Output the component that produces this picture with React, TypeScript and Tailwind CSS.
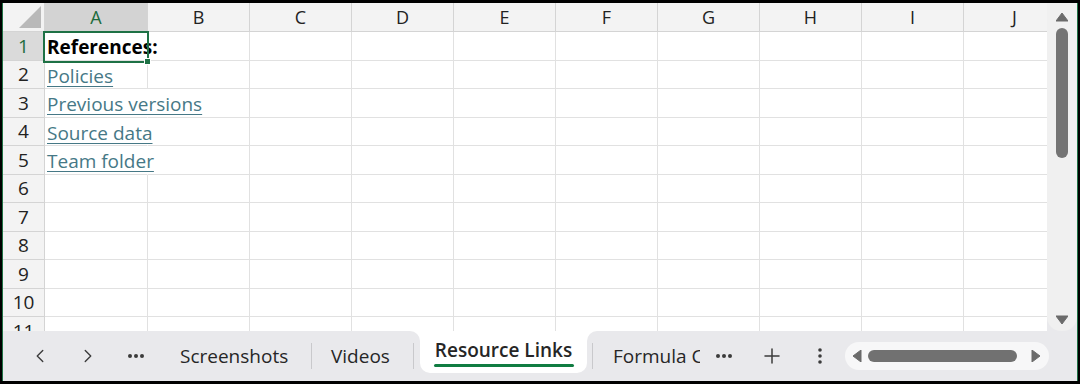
import { ChevronLeft, ChevronRight, Plus } from "lucide-react";

const COLS = ["A", "B", "C", "D", "E", "F", "G", "H", "I", "J"];
const ROW_H = [29, 28, 29, 28, 29, 28, 29, 28, 29, 28, 29];

type Cell = { text: string; bold?: boolean; link?: boolean };
const CELLS: Record<number, Cell> = {
  1: { text: "References:", bold: true },
  2: { text: "Policies", link: true },
  3: { text: "Previous versions", link: true },
  4: { text: "Source data", link: true },
  5: { text: "Team folder", link: true },
};

function Dots({ vertical = false }: { vertical?: boolean }) {
  return vertical ? (
    <svg width="6" height="18" viewBox="0 0 6 18">
      <circle cx="3" cy="3" r="1.8" fill="#3b3b3b" />
      <circle cx="3" cy="9" r="1.8" fill="#3b3b3b" />
      <circle cx="3" cy="15" r="1.8" fill="#3b3b3b" />
    </svg>
  ) : (
    <svg width="18" height="6" viewBox="0 0 18 6">
      <circle cx="3" cy="3" r="2" fill="#3b3b3b" />
      <circle cx="9" cy="3" r="2" fill="#3b3b3b" />
      <circle cx="15" cy="3" r="2" fill="#3b3b3b" />
    </svg>
  );
}

function Tri({ dir }: { dir: "up" | "down" | "left" | "right" }) {
  const pts = {
    up: "0,9 6,1 12,9",
    down: "0,1 6,9 12,1",
    left: "9,0 1,6 9,12",
    right: "1,0 9,6 1,12",
  }[dir];
  const vert = dir === "up" || dir === "down";
  return (
    <svg width={vert ? 12 : 10} height={vert ? 10 : 12} viewBox={vert ? "0 0 12 10" : "0 0 10 12"}>
      <polygon points={pts} fill="#6b6b6b" strokeLinejoin="round" stroke="#6b6b6b" strokeWidth="1" />
    </svg>
  );
}

function Grid() {
  return (
    <div className="relative w-[1044px] h-[328px] overflow-hidden bg-white">
      {/* column header row */}
      <div className="flex h-[29px]">
        <div className="relative w-[42px] shrink-0 bg-[#f3f3f3] border-r border-b border-[#d4d4d4]">
          <svg className="absolute right-[3px] bottom-[3px]" width="22" height="22" viewBox="0 0 22 22">
            <polygon points="22,0 22,22 0,22" fill="#b9b9b9" />
          </svg>
        </div>
        {COLS.map((c, i) => (
          <div
            key={c}
            className={`${i === 0 ? "w-[103px] bg-[#d3d3d3] text-[#1d6b3d]" : "w-[102px] bg-[#f3f3f3] text-[#222]"} shrink-0 flex items-center justify-center border-r border-b border-[#d4d4d4] text-[18px]`}
          >
            {c}
          </div>
        ))}
      </div>
      {ROW_H.map((h, r) => {
        const n = r + 1;
        const cell = CELLS[n];
        return (
          <div key={n} className="flex" style={{ height: h }}>
            <div
              className={`w-[42px] shrink-0 flex items-center justify-center border-r border-b border-[#d4d4d4] text-[19px] ${n === 1 ? "bg-[#dadada] text-[#1d6b3d]" : "bg-[#f3f3f3] text-[#222]"}`}
            >
              {n}
            </div>
            {COLS.map((c, i) => (
              <div
                key={c}
                className={`${i === 0 ? "w-[103px]" : "w-[102px]"} shrink-0 flex items-center pt-[2px] border-b border-[#e1e1e1] ${i === 0 && cell && n !== 2 ? "border-r border-r-transparent" : "border-r border-r-[#e1e1e1]"}`}
              >
                {i === 0 && cell && (
                  <span
                    className={`relative z-10 pl-[2px] whitespace-nowrap text-[19px] leading-[24px] ${cell.bold ? "font-bold text-black" : ""} ${cell.link ? "text-[#467886] underline underline-offset-[3px]" : ""}`}
                  >
                    {cell.text}
                  </span>
                )}
              </div>
            ))}
          </div>
        );
      })}
      {/* active cell outline */}
      <div className="absolute left-[40px] top-[28px] w-[106px] h-[32px] border-2 border-[#1e7145] z-20" />
      <div className="absolute left-[141px] top-[55px] w-[7px] h-[7px] bg-[#1e7145] border border-white z-30" />
    </div>
  );
}

function VScroll() {
  return (
    <div className="w-[30px] h-[328px] bg-[#e9e9ec]">
      <div className="h-full bg-[#f0f0f0] rounded-b-[14px] flex flex-col items-center pt-[9px] pb-[6px]">
        <Tri dir="up" />
        <div className="mt-[6px] w-[12px] h-[130px] rounded-full bg-[#747474]" />
        <div className="flex-1" />
        <Tri dir="down" />
      </div>
    </div>
  );
}

function TabBar() {
  const tabText = "text-[19px] text-[#262626] whitespace-nowrap";
  return (
    <div className="flex h-[50px] bg-white">
      <div className="w-[417px] shrink-0 bg-[#e9e9ec] rounded-tr-[10px] flex items-center pl-[13px]">
        <div className="w-[48px] flex justify-center">
          <ChevronLeft size={22} strokeWidth={1.5} color="#3b3b3b" />
        </div>
        <div className="w-[48px] flex justify-center">
          <ChevronRight size={22} strokeWidth={1.5} color="#3b3b3b" />
        </div>
        <div className="w-[48px] flex justify-center">
          <Dots />
        </div>
        <div className={`w-[151px] pl-[20px] ${tabText}`}>Screenshots</div>
        <div className="w-px h-[26px] bg-[#c9c9cc]" />
        <div className={`w-[101px] pl-[19px] ${tabText}`}>Videos</div>
        <div className="w-px h-[26px] bg-[#c9c9cc]" />
      </div>
      <div className="w-[167px] shrink-0 bg-[#e9e9ec]">
        <div className="h-[42px] bg-white rounded-b-[10px] flex flex-col items-center justify-center">
          <span className={`${tabText} font-semibold text-[#1f1f1f] leading-[24px]`}>Resource Links</span>
          <div className="mt-[2px] w-[140px] h-[3px] bg-[#107c41] rounded-full" />
        </div>
      </div>
      <div className="flex-1 bg-[#e9e9ec] rounded-tl-[10px] flex items-center pl-[5px]">
        <div className="w-px h-[26px] bg-[#c9c9cc]" />
        <div className={`w-[107px] pl-[20px] overflow-hidden ${tabText}`}>Formula Cheat Sheet</div>
        <div className="w-[48px] flex justify-center">
          <Dots />
        </div>
        <div className="w-[48px] flex justify-center">
          <Plus size={24} strokeWidth={1.5} color="#3b3b3b" />
        </div>
        <div className="w-[48px] flex justify-center">
          <Dots vertical />
        </div>
        <div className="ml-[1px] w-[204px] h-[28px] rounded-full bg-[#f7f7f8] flex items-center pl-[7px] pr-[8px]">
          <Tri dir="left" />
          <div className="ml-[6px] w-[149px] h-[12px] rounded-full bg-[#717171]" />
          <div className="flex-1" />
          <Tri dir="right" />
        </div>
      </div>
    </div>
  );
}

export default function App() {
  return (
    <div
      className="w-[1080px] h-[384px] bg-black border-t-[3px] border-b-[3px] border-x-2 border-black overflow-hidden"
      style={{ fontFamily: "'Open Sans', 'Noto Sans', sans-serif" }}
    >
      <div className="h-full flex flex-col border-x border-[#1e7145] bg-white">
        <div className="flex">
          <Grid />
          <VScroll />
        </div>
        <TabBar />
      </div>
    </div>
  );
}
